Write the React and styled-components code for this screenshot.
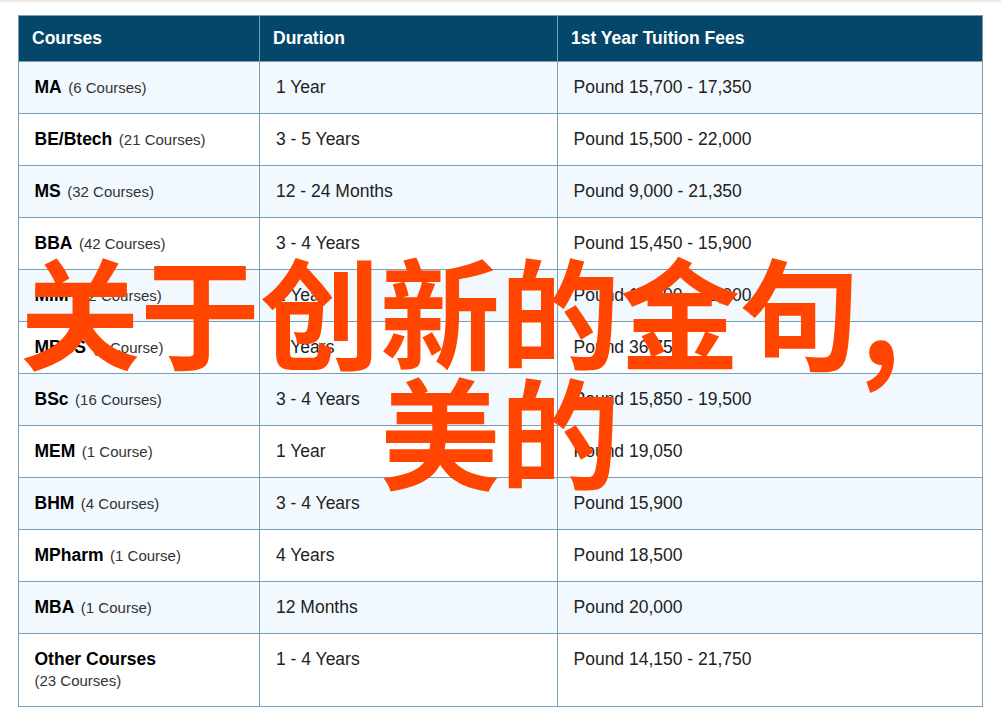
import React from 'react';
import styled, { createGlobalStyle } from 'styled-components';

const GlobalStyle = createGlobalStyle`
  html, body {
    margin: 0;
    padding: 0;
    background: #fff;
  }
  body {
    font-family: "Liberation Sans", Arial, sans-serif;
  }
`;

const Page = styled.div`
  position: relative;
  width: 1001px;
  height: 720px;
  overflow: hidden;
  box-sizing: border-box;
  padding: 15px 18px 0;
  background: linear-gradient(#e4e4e4 0, #f6f6f6 2px, #fff 4px);
`;

const Table = styled.table`
  width: 965px;
  border-collapse: collapse;
  table-layout: fixed;
  border: 1px solid #7a9fb5;
`;

const HeadCell = styled.th`
  height: 46px;
  padding: 0 0 0 13px;
  background: #04476a;
  border: 1px solid #7a9fb5;
  color: #fff;
  font-size: 17.5px;
  font-weight: bold;
  text-align: left;
  box-sizing: border-box;
`;

const Row = styled.tr`
  background: ${(p) => (p.$striped ? '#f2f9fe' : '#fff')};
`;

const Cell = styled.td`
  height: ${(p) => (p.$tall ? '73px' : '52px')};
  padding: 0 0 0 ${(p) => p.$inset || '16px'};
  border: 1px solid #7a9fb5;
  color: #222;
  font-size: 17.5px;
  vertical-align: ${(p) => (p.$tall ? 'top' : 'middle')};
  box-sizing: border-box;
`;

const CourseName = styled.strong`
  color: #000;
  font-size: 17.5px;
  font-weight: bold;
`;

const CourseCount = styled.span`
  margin-left: 6.5px;
  color: #333;
  font-size: 15px;
`;

const CourseCountBlock = styled.div`
  margin-top: 2px;
  color: #333;
  font-size: 15px;
`;

const TallContent = styled.div`
  padding-top: 15px;
`;

const Headline = styled.div`
  position: absolute;
  left: 20px;
  top: 249px;
  width: 960px;
  color: #ff4500;
  font-family: "Noto Sans CJK SC", sans-serif;
  font-size: 120px;
  font-weight: 700;
  line-height: 120px;
  text-align: center;
`;

// the comma sits further left and hangs lower in the reference font
const HeadlineComma = styled.span`
  display: inline-block;
  transform: translate(-13px, 4px) scaleY(1.15);
`;

const courses = [
  { name: 'MA', count: '(6 Courses)', duration: '1 Year', fees: 'Pound 15,700 - 17,350' },
  { name: 'BE/Btech', count: '(21 Courses)', duration: '3 - 5 Years', fees: 'Pound 15,500 - 22,000' },
  { name: 'MS', count: '(32 Courses)', duration: '12 - 24 Months', fees: 'Pound 9,000 - 21,350' },
  { name: 'BBA', count: '(42 Courses)', duration: '3 - 4 Years', fees: 'Pound 15,450 - 15,900' },
  { name: 'MIM', count: '(12 Courses)', duration: '1 Year', fees: 'Pound 17,000 - 18,000' },
  { name: 'MBBS', count: '(1 Course)', duration: '4 Years', fees: 'Pound 36,750' },
  { name: 'BSc', count: '(16 Courses)', duration: '3 - 4 Years', fees: 'Pound 15,850 - 19,500' },
  { name: 'MEM', count: '(1 Course)', duration: '1 Year', fees: 'Pound 19,050' },
  { name: 'BHM', count: '(4 Courses)', duration: '3 - 4 Years', fees: 'Pound 15,900' },
  { name: 'MPharm', count: '(1 Course)', duration: '4 Years', fees: 'Pound 18,500' },
  { name: 'MBA', count: '(1 Course)', duration: '12 Months', fees: 'Pound 20,000' },
];

const App = () => (
  <>
    <GlobalStyle />
    <Page>
      <Table>
        <colgroup>
          <col style={{ width: 241 }} />
          <col style={{ width: 298 }} />
          <col />
        </colgroup>
        <thead>
          <tr>
            <HeadCell>Courses</HeadCell>
            <HeadCell>Duration</HeadCell>
            <HeadCell>1st Year Tuition Fees</HeadCell>
          </tr>
        </thead>
        <tbody>
          {courses.map((course, index) => (
            <Row key={course.name} $striped={index % 2 === 0}>
              <Cell $inset="15.5px">
                <CourseName>{course.name}</CourseName>
                <CourseCount>{course.count}</CourseCount>
              </Cell>
              <Cell>{course.duration}</Cell>
              <Cell $inset="15.5px">{course.fees}</Cell>
            </Row>
          ))}
          <Row>
            <Cell $tall $inset="15.5px">
              <TallContent>
                <CourseName>Other Courses</CourseName>
                <CourseCountBlock>(23 Courses)</CourseCountBlock>
              </TallContent>
            </Cell>
            <Cell $tall><TallContent>1 - 4 Years</TallContent></Cell>
            <Cell $tall $inset="15.5px"><TallContent>Pound 14,150 - 21,750</TallContent></Cell>
          </Row>
        </tbody>
      </Table>
      <Headline>关于创新的金句<HeadlineComma>，</HeadlineComma>美的</Headline>
    </Page>
  </>
);

export default App;
